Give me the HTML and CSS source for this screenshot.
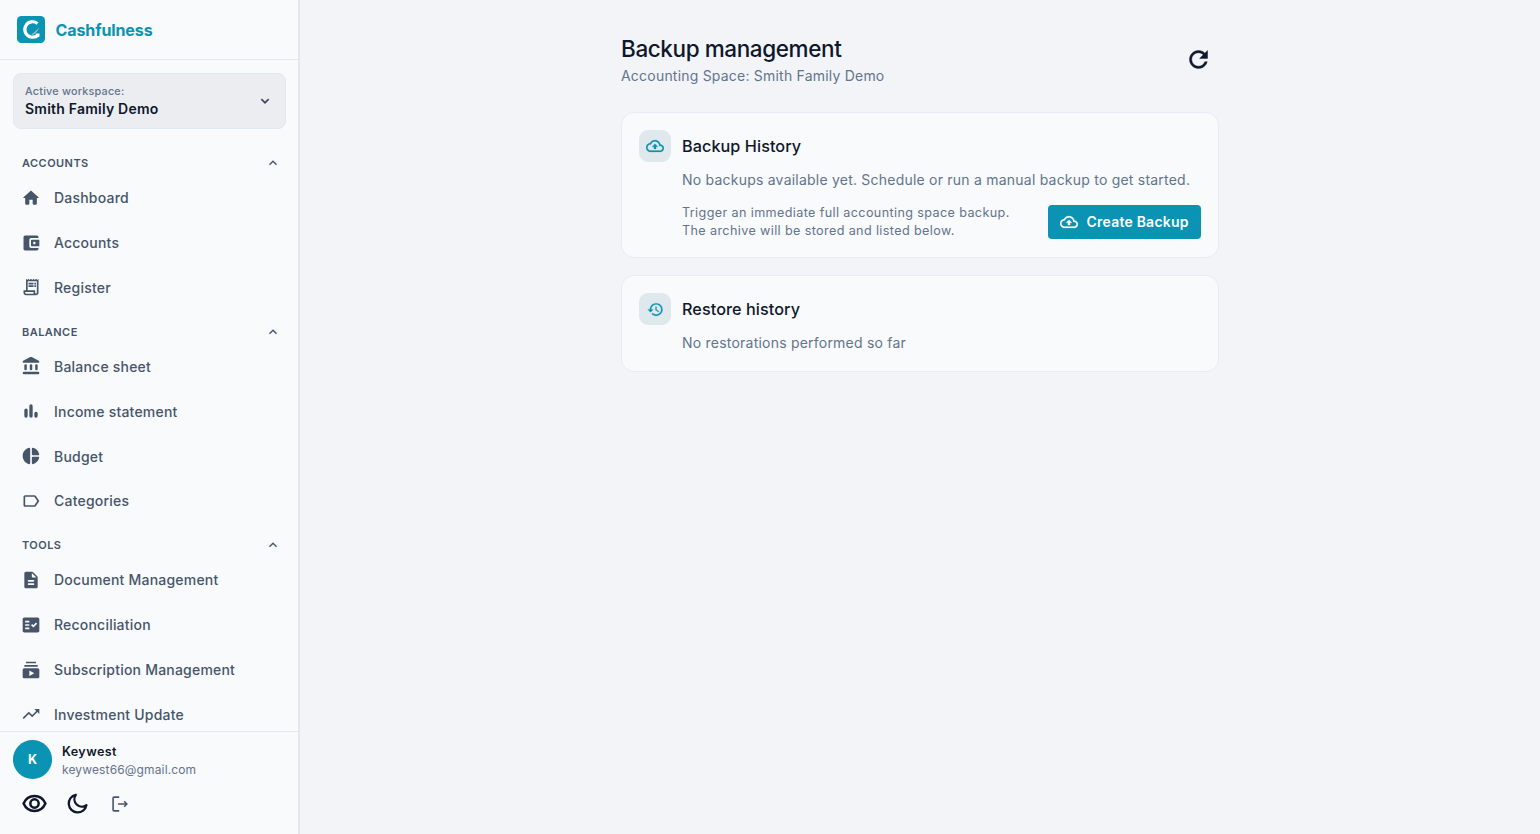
FILE: index.html
```html
<!DOCTYPE html>
<html lang="en">
<head>
    <meta charset="UTF-8">
    <title>Cashfulness - Backup management</title>
    <link rel="stylesheet" href="styles.css">
</head>
<body>
    <aside class="sidebar">
        <div class="brand">
            <svg class="brand-logo" viewBox="0 0 28 28">
                <rect width="28" height="27" rx="4.5" fill="#0a93b3"/>
                <path d="M20.500 7.600A7.700 7.700 0 1 0 13.500 20.900C16.500 21.500 19.500 20.800 21.300 19.300" fill="none" stroke="#fff" stroke-width="3.2"/>
                <path d="M14.500 18.200C17.500 16.600 19.800 14.200 21.900 11.200 21.600 14 19.300 16.800 16 18.800z" fill="#b9bccb"/>
                <path d="M18.600 17.600h3.900v2.600l-3 1z" fill="#fff"/>
            </svg>
            <span class="brand-name">Cashfulness</span>
        </div>

        <div class="workspace">
            <div>
                <div class="workspace-label">Active workspace:</div>
                <div class="workspace-name">Smith Family Demo</div>
            </div>
            <svg class="workspace-arrow" viewBox="0 0 24 24"><path d="M7.410 8.590 12 13.170l4.590-4.580L18 10l-6 6-6-6z"/></svg>
        </div>

        <nav class="nav">
            <div class="nav-section">
                <span>ACCOUNTS</span>
                <svg viewBox="0 0 24 24"><path d="M12 8l-6 6 1.410 1.410L12 10.830l4.590 4.580L18 14z"/></svg>
            </div>
            <a class="nav-item">
                <svg viewBox="0 0 24 24"><path d="M10 19v-5h4v5c0 .55.45 1 1 1h3c.55 0 1-.45 1-1v-7h1.700c.46 0 .68-.57.33-.87L12.670 3.600c-.38-.34-.96-.34-1.340 0l-8.360 7.530c-.34.3-.13.87.33.87H5v7c0 .55.45 1 1 1h3c.55 0 1-.45 1-1z"/></svg>
                <span>Dashboard</span>
            </a>
            <a class="nav-item">
                <svg viewBox="0 0 24 24"><path d="M10 16V8c0-1.100.89-2 2-2h9V5c0-1.100-.9-2-2-2H5c-1.110 0-2 .9-2 2v14c0 1.100.89 2 2 2h14c1.100 0 2-.9 2-2v-1h-9c-1.110 0-2-.9-2-2zm3-8c-.55 0-1 .45-1 1v6c0 .55.45 1 1 1h9V8h-9zm3 5.500c-.83 0-1.500-.67-1.500-1.500s.67-1.500 1.500-1.500 1.500.67 1.500 1.500-.67 1.500-1.500 1.500z"/></svg>
                <span>Accounts</span>
            </a>
            <a class="nav-item">
                <svg viewBox="0 0 24 24"><path d="M19.500 3.500 18 2l-1.500 1.500L15 2l-1.500 1.500L12 2l-1.500 1.500L9 2 7.500 3.500 6 2v14H3v3c0 1.660 1.340 3 3 3h12c1.660 0 3-1.340 3-3V2l-1.500 1.500zM15 20H6c-.55 0-1-.45-1-1v-1h10v2zm4-1c0 .55-.45 1-1 1s-1-.45-1-1v-3H8V5h11v14z"/><path d="M9 7h6v2H9zM16 7h2v2h-2zM9 10h6v2H9zM16 10h2v2h-2z"/></svg>
                <span>Register</span>
            </a>

            <div class="nav-section">
                <span>BALANCE</span>
                <svg viewBox="0 0 24 24"><path d="M12 8l-6 6 1.410 1.410L12 10.830l4.590 4.580L18 14z"/></svg>
            </div>
            <a class="nav-item">
                <svg viewBox="0 0 24 24"><rect x="4" y="10" width="3" height="7" rx="1.500"/><rect x="10.500" y="10" width="3" height="7" rx="1.500"/><rect x="17" y="10" width="3" height="7" rx="1.500"/><rect x="2" y="19" width="20" height="3" rx="1.500"/><path d="M10.570 1.490 2.670 5.650c-.41.21-.67.640-.67 1.100C2 7.440 2.560 8 3.250 8h17.510C21.440 8 22 7.440 22 6.750c0-.46-.26-.89-.67-1.100l-7.900-4.160c-.87-.46-1.990-.46-2.860 0z"/></svg>
                <span>Balance sheet</span>
            </a>
            <a class="nav-item">
                <svg viewBox="0 0 24 24"><rect x="4" y="9" width="4" height="11" rx="2"/><rect x="10" y="4" width="4" height="16" rx="2"/><rect x="16" y="13" width="4" height="7" rx="2"/></svg>
                <span>Income statement</span>
            </a>
            <a class="nav-item">
                <svg viewBox="0 0 24 24"><path d="M11 3.180v17.640c0 .64-.59 1.120-1.210.98C5.320 20.800 2 16.790 2 12s3.320-8.800 7.790-9.800c.62-.14 1.210.34 1.210.98zm2.030 0v6.810c0 .55.45 1 1 1h6.790c.64 0 1.120-.59.98-1.220-.85-3.760-3.800-6.720-7.550-7.570-.63-.14-1.220.34-1.220.98zm0 10.830v6.810c0 .64.590 1.120 1.220.98 3.760-.85 6.710-3.820 7.560-7.580.14-.62-.35-1.220-.98-1.220h-6.790c-.56.010-1.010.46-1.010 1.010z"/></svg>
                <span>Budget</span>
            </a>
            <a class="nav-item">
                <svg viewBox="0 0 24 24"><path d="M17.630 5.840C17.270 5.330 16.670 5 16 5H5c-1.100 0-2 .9-2 2v10c0 1.100.9 2 2 2h11c.67 0 1.270-.33 1.630-.84L22 12l-4.370-6.160zM16 17H5V7h11l3.550 5L16 17z"/></svg>
                <span>Categories</span>
            </a>

            <div class="nav-section">
                <span>TOOLS</span>
                <svg viewBox="0 0 24 24"><path d="M12 8l-6 6 1.410 1.410L12 10.830l4.590 4.580L18 14z"/></svg>
            </div>
            <a class="nav-item">
                <svg viewBox="0 0 24 24"><path d="M14.590 2.590c-.38-.38-.89-.59-1.420-.59H6c-1.100 0-2 .9-2 2v16c0 1.100.89 2 1.990 2H18c1.100 0 2-.9 2-2V8.830c0-.53-.21-1.040-.59-1.410l-4.820-4.830zM15 18H9c-.55 0-1-.45-1-1s.45-1 1-1h6c.55 0 1 .45 1 1s-.45 1-1 1zm0-4H9c-.55 0-1-.45-1-1s.45-1 1-1h6c.55 0 1 .45 1 1s-.45 1-1 1zm-2-6V3.500L18.500 9H14c-.55 0-1-.45-1-1z"/></svg>
                <span>Document Management</span>
            </a>
            <a class="nav-item">
                <svg viewBox="0 0 24 24"><path fill-rule="evenodd" d="M20 3H4c-1.100 0-2 .9-2 2v14c0 1.100.9 2 2 2h16c1.100 0 2-.9 2-2V5c0-1.100-.9-2-2-2zM10 17H5v-2h5v2zm0-4H5v-2h5v2zm0-4H5V7h5v2zm4.820 6L12 12.160l1.410-1.410 1.410 1.420L17.990 9l1.420 1.420L14.820 15z"/></svg>
                <span>Reconciliation</span>
            </a>
            <a class="nav-item">
                <svg viewBox="0 0 24 24"><path d="M20 8H4V6h16v2zm-2-6H6v2h12V2zm4 10v8c0 1.100-.9 2-2 2H4c-1.100 0-2-.9-2-2v-8c0-1.100.9-2 2-2h16c1.100 0 2 .9 2 2zm-6 4-6-3.270v6.530L16 16z"/></svg>
                <span>Subscription Management</span>
            </a>
            <a class="nav-item">
                <svg viewBox="0 0 24 24"><path d="M16 6l2.290 2.290-4.880 4.880-4-4L2 16.590 3.410 18l6-6 4 4 6.300-6.290L22 12V6z"/></svg>
                <span>Investment Update</span>
            </a>
        </nav>

        <div class="user">
            <div class="user-info">
                <div class="avatar">K</div>
                <div>
                    <div class="user-name">Keywest</div>
                    <div class="user-mail">keywest66@gmail.com</div>
                </div>
            </div>
            <div class="user-actions">
                <svg class="eye" viewBox="0 0 24 18"><path d="M1.500 9C3.500 4.500 7.300 1.900 12 1.900S20.500 4.500 22.500 9c-2 4.500-5.800 7.100-10.500 7.100S3.500 13.500 1.500 9z"/><circle cx="12" cy="9" r="4"/></svg>
                <svg class="moon" viewBox="0 0 24 24"><path d="M10.200 2.900A9.300 9.300 0 1 0 21.300 13.800 7.900 7.900 0 0 1 10.200 2.900z"/></svg>
                <svg class="logout" viewBox="0 0 18 18"><path d="M8.200 2.100H3.100c-.6 0-1 .4-1 1v11.800c0 .6.4 1 1 1h5.100M7 9h8.600M13.200 6.300 15.900 9l-2.700 2.700"/></svg>
            </div>
        </div>
    </aside>

    <main class="main">
        <div class="content">
            <header class="page-header">
                <div>
                    <h1>Backup management</h1>
                    <p>Accounting Space: Smith Family Demo</p>
                </div>
                <svg class="refresh" viewBox="0 0 24 24"><path d="M17.650 6.350C16.200 4.900 14.210 4 12 4c-4.420 0-7.990 3.580-7.990 8s3.570 8 7.990 8c3.730 0 6.840-2.550 7.730-6h-2.080c-.82 2.330-3.040 4-5.650 4-3.310 0-6-2.690-6-6s2.690-6 6-6c1.660 0 3.140.69 4.220 1.780L13 11h7V4l-2.350 2.350z"/></svg>
            </header>

            <section class="card backup-card">
                <div class="card-icon">
                    <svg viewBox="0 0 24 24"><path d="M19.350 10.040C18.670 6.590 15.640 4 12 4 9.110 4 6.600 5.640 5.350 8.040 2.340 8.360 0 10.910 0 14c0 3.310 2.690 6 6 6h13c2.760 0 5-2.240 5-5 0-2.640-2.050-4.780-4.650-4.960zM19 18H6c-2.210 0-4-1.790-4-4 0-2.050 1.530-3.760 3.560-3.970l1.070-.11.5-.95C8.080 7.140 9.940 6 12 6c2.620 0 4.880 1.860 5.390 4.430l.3 1.500 1.530.11c1.560.1 2.780 1.410 2.780 2.960 0 1.650-1.350 3-3 3zM8 13h2.550v3h2.900v-3H16l-4-4z"/></svg>
                </div>
                <div class="card-body">
                    <h2>Backup History</h2>
                    <p class="card-text">No backups available yet. Schedule or run a manual backup to get started.</p>
                    <div class="backup-row">
                        <p>Trigger an immediate full accounting space backup.<br>The archive will be stored and listed below.</p>
                        <button class="create-btn">
                            <svg viewBox="0 0 24 24"><path d="M19.350 10.040C18.670 6.590 15.640 4 12 4 9.110 4 6.600 5.640 5.350 8.040 2.340 8.360 0 10.910 0 14c0 3.310 2.690 6 6 6h13c2.760 0 5-2.240 5-5 0-2.640-2.050-4.780-4.650-4.960zM19 18H6c-2.210 0-4-1.790-4-4 0-2.050 1.530-3.760 3.560-3.970l1.070-.11.5-.95C8.080 7.140 9.940 6 12 6c2.620 0 4.880 1.860 5.390 4.430l.3 1.500 1.530.11c1.560.1 2.780 1.410 2.780 2.960 0 1.650-1.350 3-3 3zM8 13h2.550v3h2.900v-3H16l-4-4z"/></svg>
                            <span>Create Backup</span>
                        </button>
                    </div>
                </div>
            </section>

            <section class="card restore-card">
                <div class="card-icon">
                    <svg viewBox="0 0 24 24"><path d="M13 3c-4.970 0-9 4.030-9 9H1l3.890 3.890.07.14L9 12H6c0-3.870 3.130-7 7-7s7 3.130 7 7-3.130 7-7 7c-1.930 0-3.680-.79-4.940-2.060l-1.420 1.420C8.270 19.990 10.510 21 13 21c4.970 0 9-4.030 9-9s-4.030-9-9-9zm-1 5v5l4.280 2.540.72-1.210-3.500-2.080V8H12z"/></svg>
                </div>
                <div class="card-body">
                    <h2>Restore history</h2>
                    <p class="card-text">No restorations performed so far</p>
                </div>
            </section>
        </div>
    </main>
</body>
</html>
```

FILE: styles.css
```css
* {
    box-sizing: border-box;
}

body {
    margin: 0;
    height: 100vh;
    display: flex;
    overflow: hidden;
    font-family: Inter, "Liberation Sans", sans-serif;
    background-color: #f2f4f8;
    color: #0f172a;
}

h1, h2, p {
    margin: 0;
}

/* sidebar */
.sidebar {
    width: 300px;
    height: 100%;
    flex-shrink: 0;
    display: flex;
    flex-direction: column;
    background-color: #f8fafc;
    border-right: 2px solid #e2e8f0;
}

.brand {
    height: 60px;
    flex-shrink: 0;
    display: flex;
    align-items: center;
    gap: 10.5px;
    padding-left: 17px;
    border-bottom: 1px solid #e2e8f0;
}

.brand-logo {
    width: 28px;
    height: 28px;
}

.brand-name {
    font-size: 16px;
    font-weight: 700;
    letter-spacing: -0.1px;
    color: #0a93b3;
}

.workspace {
    height: 56px;
    flex-shrink: 0;
    display: flex;
    align-items: center;
    justify-content: space-between;
    margin: 12.6px 12px 0 13px;
    padding: 0 12px 0 11px;
    background-color: #ebedf1;
    border: 1px solid #e2e8f0;
    border-radius: 8px;
}

.workspace-label {
    font-size: 10.8px;
    line-height: 16px;
    font-weight: 500;
    letter-spacing: 0.22px;
    color: #64748b;
}

.workspace-name {
    font-size: 14px;
    line-height: 18px;
    font-weight: 600;
    letter-spacing: 0.22px;
}

.workspace-arrow {
    width: 16px;
    height: 16px;
    fill: #334155;
    stroke: #334155;
    stroke-width: 0.6;
}

.nav {
    flex: 1;
    min-height: 0;
    overflow: hidden;
    padding: 12.7px 17px 0 21px;
}

.nav-section {
    height: 25px;
    display: flex;
    align-items: center;
    justify-content: space-between;
    margin-top: 9.1px;
    padding-left: 1px;
    font-size: 11px;
    font-weight: 600;
    letter-spacing: 0.45px;
    color: #475569;
}

.nav-section svg {
    width: 16px;
    height: 16px;
    fill: #475569;
}

.nav-item {
    height: 44.85px;
    display: flex;
    align-items: center;
    gap: 13px;
    font-size: 14px;
    font-weight: 500;
    letter-spacing: 0.21px;
    color: #475569;
}

.nav-item svg {
    width: 20px;
    height: 20px;
    fill: #475569;
}

.user {
    height: 103px;
    flex-shrink: 0;
    padding: 8px 13px 0;
    border-top: 1px solid #e2e8f0;
}

.user-info {
    display: flex;
    align-items: center;
    gap: 10px;
}

.avatar {
    width: 39px;
    height: 39px;
    display: flex;
    align-items: center;
    justify-content: center;
    border-radius: 50%;
    background-color: #0a93b3;
    color: #ffffff;
    font-size: 12.6px;
    font-weight: 700;
}

.user-name {
    padding-top: 2px;
    font-size: 12.6px;
    line-height: 18px;
    font-weight: 600;
    letter-spacing: 0.4px;
}

.user-mail {
    font-size: 12px;
    line-height: 17px;
    letter-spacing: 0.14px;
    color: #64748b;
}

.user-actions {
    display: flex;
    align-items: center;
    margin-top: 13px;
    padding-left: 9px;
}

.user-actions svg {
    fill: none;
    stroke: #0f172a;
    stroke-width: 2.4;
    stroke-linejoin: round;
}

.eye {
    width: 25px;
    height: 19px;
    margin-right: 18.5px;
}

.moon {
    width: 23px;
    height: 23px;
    margin-right: 22.5px;
}

.user-actions .logout {
    width: 18px;
    height: 18px;
    stroke: #475569;
    stroke-width: 1.6;
}

/* main content */
.main {
    flex: 1;
    display: flex;
    justify-content: center;
}

.content {
    width: 598px;
    padding-top: 34px;
}

.page-header {
    height: 77.6px;
    display: flex;
    justify-content: space-between;
    padding-right: 7px;
}

.page-header h1 {
    font-size: 22.5px;
    line-height: 30px;
    font-weight: 500;
    letter-spacing: -0.4px;
}

.page-header p {
    font-size: 14px;
    line-height: 23px;
    letter-spacing: 0.21px;
    color: #64748b;
}

.refresh {
    width: 27px;
    height: 27px;
    margin-top: 12px;
    fill: #0f172a;
    stroke: #0f172a;
    stroke-width: 0.4;
}

.card {
    display: flex;
    gap: 11px;
    padding: 17px;
    background-color: #f8fafc;
    border: 1px solid #e8ecf2;
    border-radius: 13px;
}

.backup-card {
    height: 146px;
    margin-bottom: 17.6px;
}

.restore-card {
    height: 96.6px;
}

.card-icon {
    width: 32px;
    height: 32px;
    flex-shrink: 0;
    display: flex;
    align-items: center;
    justify-content: center;
    border-radius: 9px;
    background-color: #dfe9ed;
}

.card-icon svg {
    width: 18px;
    height: 18px;
    fill: #0a93b3;
    stroke: #0a93b3;
    stroke-width: 0.3;
}

.restore-card .card-icon svg {
    width: 17px;
    height: 17px;
}

.card-body {
    flex: 1;
}

.card h2 {
    font-size: 16.2px;
    line-height: 32px;
    font-weight: 500;
    letter-spacing: 0.08px;
}

.card-text {
    margin-top: 7.2px;
    font-size: 14px;
    line-height: 22px;
    letter-spacing: 0.22px;
    white-space: nowrap;
    color: #64748b;
}

.backup-row {
    display: flex;
    align-items: center;
    justify-content: space-between;
    margin-top: 12.8px;
}

.backup-row p {
    font-size: 12.6px;
    line-height: 18px;
    letter-spacing: 0.38px;
    color: #64748b;
}

.create-btn {
    width: 153px;
    height: 34px;
    display: flex;
    align-items: center;
    gap: 8.5px;
    padding: 0 0 0 12px;
    border: none;
    border-radius: 4px;
    background-color: #0a93b3;
    color: #ffffff;
    font-family: inherit;
    font-size: 14px;
    font-weight: 600;
    letter-spacing: 0.22px;
    white-space: nowrap;
}

.create-btn svg {
    width: 18px;
    height: 18px;
    fill: #ffffff;
    stroke: #ffffff;
    stroke-width: 0.3;
}
```
